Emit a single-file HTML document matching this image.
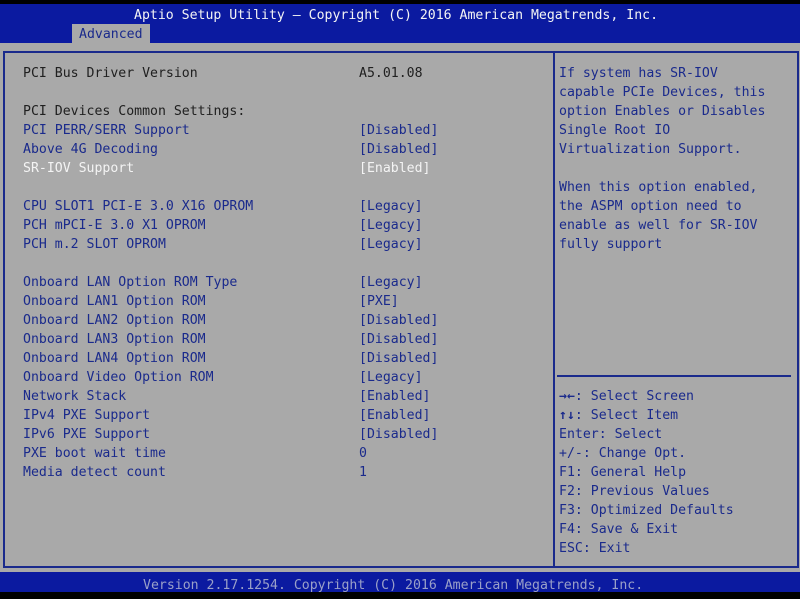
<!DOCTYPE html>
<html><head><meta charset="utf-8"><style>
*{margin:0;padding:0}
body{width:800px;height:599px;background:#a9a9a9;position:relative;overflow:hidden;font-family:"DejaVu Sans Mono","Liberation Mono",monospace;font-size:13.2px;color:#1a2a8c}
.t{position:absolute;white-space:pre;line-height:19px}
#top{position:absolute;left:0;top:0;width:800px;height:4px;background:#000}
#hdr{position:absolute;left:0;top:4px;width:800px;height:39px;background:#0b1aa0}
#tab{position:absolute;left:72px;top:24px;width:78px;height:20px;background:#a9a9a9;color:#1a2a8c}
#frame{position:absolute;left:3px;top:51px;width:792px;height:513px;border:2px solid #1a2a8c}
#div{position:absolute;left:553px;top:51px;width:2px;height:517px;background:#1a2a8c}
#sep{position:absolute;left:557px;top:375px;width:234px;height:2px;background:#1a2a8c}
#foot{position:absolute;left:0;top:572px;width:800px;height:20px;background:#0b1aa0}
#bot{position:absolute;left:0;top:592px;width:800px;height:7px;background:#000}
.w{color:#f4f4f4}.k{color:#202020}
b{font-weight:bold}
</style></head><body>
<div id="top"></div><div id="hdr"></div>
<div class="t w" style="left:134px;top:6px">Aptio Setup Utility – Copyright (C) 2016 American Megatrends, Inc.</div>
<div id="tab"><div class="t" style="left:7px;top:1px">Advanced</div></div>
<div id="frame"></div><div id="div"></div><div id="sep"></div>
<div class="t k" style="left:23px;top:64px">PCI Bus Driver Version</div>
<div class="t k" style="left:359px;top:64px">A5.01.08</div>
<div class="t k" style="left:23px;top:102px">PCI Devices Common Settings:</div>
<div class="t" style="left:23px;top:121px">PCI PERR/SERR Support
Above 4G Decoding</div>
<div class="t" style="left:359px;top:121px">[Disabled]
[Disabled]</div>
<div class="t w" style="left:23px;top:159px">SR-IOV Support</div>
<div class="t w" style="left:359px;top:159px">[Enabled]</div>
<div class="t" style="left:23px;top:197px">CPU SLOT1 PCI-E 3.0 X16 OPROM
PCH mPCI-E 3.0 X1 OPROM
PCH m.2 SLOT OPROM

Onboard LAN Option ROM Type
Onboard LAN1 Option ROM
Onboard LAN2 Option ROM
Onboard LAN3 Option ROM
Onboard LAN4 Option ROM
Onboard Video Option ROM
Network Stack
IPv4 PXE Support
IPv6 PXE Support
PXE boot wait time
Media detect count</div>
<div class="t" style="left:359px;top:197px">[Legacy]
[Legacy]
[Legacy]

[Legacy]
[PXE]
[Disabled]
[Disabled]
[Disabled]
[Legacy]
[Enabled]
[Enabled]
[Disabled]
0
1</div>
<div class="t" style="left:559px;top:64px">If system has SR-IOV
capable PCIe Devices, this
option Enables or Disables
Single Root IO
Virtualization Support.

When this option enabled,
the ASPM option need to
enable as well for SR-IOV
fully support</div>
<div class="t" style="left:559px;top:387px"><b>→←</b>: Select Screen
<b>↑↓</b>: Select Item
Enter: Select
+/-: Change Opt.
F1: General Help
F2: Previous Values
F3: Optimized Defaults
F4: Save &amp; Exit
ESC: Exit</div>
<div id="foot"></div><div id="bot"></div>
<div class="t" style="left:143px;top:576px;color:#9aa0c8">Version 2.17.1254. Copyright (C) 2016 American Megatrends, Inc.</div>
</body></html>
